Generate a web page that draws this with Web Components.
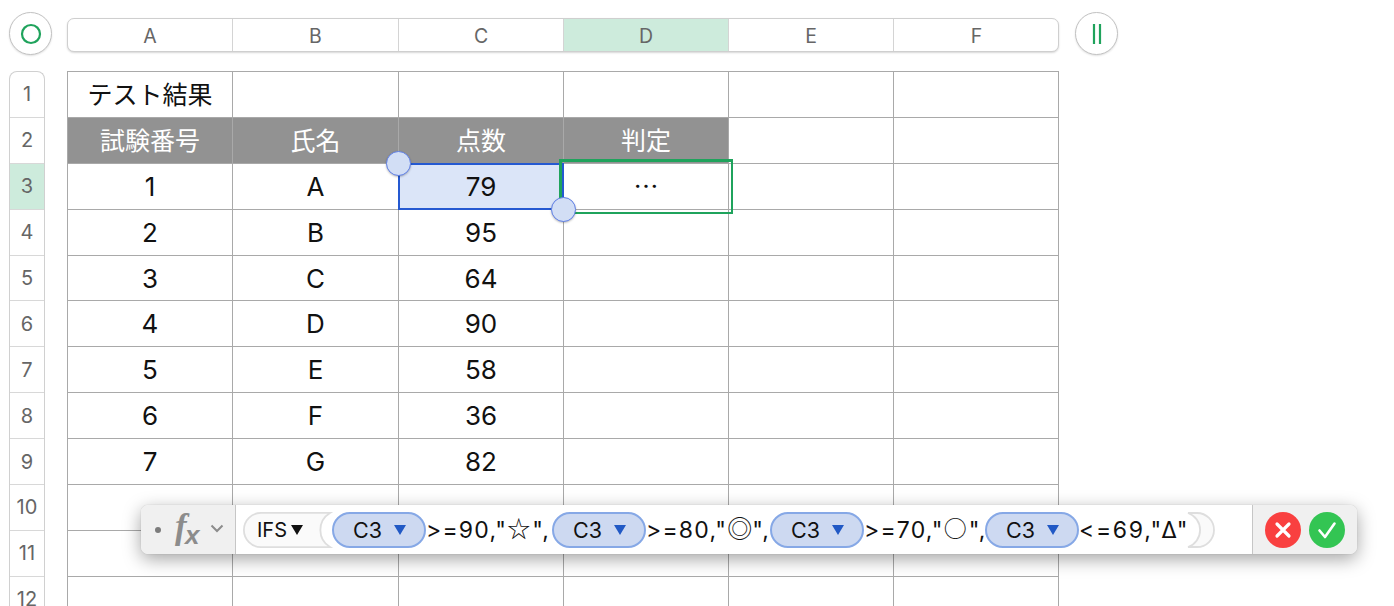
<!DOCTYPE html>
<html lang="ja"><head><meta charset="utf-8"><style>
html,body{margin:0;padding:0;background:#fff;overflow:hidden}
body{width:1394px;height:606px;font-family:Inter,"Noto Sans CJK JP",sans-serif}
</style></head><body>
<x-app></x-app>
<script>
const COLS=[165,166,165,165,165,165];
const def=(n,html,init)=>customElements.define(n,class extends HTMLElement{
  constructor(){super();this.attachShadow({mode:'open'}).innerHTML=html;}
  connectedCallback(){init&&init(this,this.shadowRoot);}
});
def('x-round-button',`<style>:host{display:flex;align-items:center;justify-content:center;width:43px;height:43px;box-sizing:border-box;border:1.5px solid #c2c2c2;border-radius:50%;background:#fff;box-shadow:0 1px 2px rgba(0,0,0,.12);flex:none}</style><slot></slot>`);
def('x-col-header',`<style>
:host{display:block;flex:none;margin:6px 16px 0 15px;box-sizing:border-box;height:34px;width:992px;border:1px solid #cfcfcf;border-radius:7px;box-shadow:0 1px 2px rgba(0,0,0,.16);overflow:hidden;background:#fff}
#g{display:flex;height:100%}
span{display:flex;align-items:center;justify-content:center;box-sizing:border-box;border-right:1px solid #d4d4d4;font:19.5px Inter,sans-serif;color:#666;height:100%;flex:none;padding-top:1px}
span:last-child{border-right:0}
.on{background:#cdebdc}
</style><div id="g"></div>`,(e,s)=>{s.getElementById('g').innerHTML=COLS.map((w,i)=>`<span style="width:${w}px" class="${i==3?'on':''}">${'ABCDEF'[i]}</span>`).join('')});
def('x-row-header',`<style>
:host{display:block;flex:none;width:36px;box-sizing:border-box;border:1px solid #d0d0d0;border-bottom:0;border-radius:8px 8px 0 0;overflow:hidden;background:#fff;height:560px;margin-right:22px}
span{display:flex;align-items:center;justify-content:center;box-sizing:border-box;height:45.9px;border-bottom:1px solid #d8d8d8;font:20px Inter,sans-serif;color:#666}
.on{background:#cdebdc}
</style><div id="g"></div>`,(e,s)=>{let h='';for(let i=1;i<=12;i++)h+=`<span class="${i==3?'on':''}">${i}</span>`;s.getElementById('g').innerHTML=h});
def('x-cell',`<style>
:host{display:flex;align-items:center;justify-content:center;box-sizing:border-box;height:100%;border-right:1px solid #a9a9a9;border-bottom:1px solid #a9a9a9;font:26px Inter,"Noto Sans CJK JP",sans-serif;color:#111;background:#fff}
:host([head]){background:#929292;color:#fff}
:host([jp]){font-family:"Noto Sans CJK JP",sans-serif;font-size:25px;padding-bottom:3px}
</style><slot></slot>`);
const DATA=[['テスト結果','','','','',''],['試験番号','氏名','点数','判定','',''],['1','A','79','…','',''],['2','B','95','','',''],['3','C','64','','',''],['4','D','90','','',''],['5','E','58','','',''],['6','F','36','','',''],['7','G','82','','','']];
def('x-sheet',`<style>
:host{display:block;position:relative;flex:none;width:992px;box-sizing:border-box;border-top:1px solid #a9a9a9;border-left:1px solid #a9a9a9;height:540px;}
#g{display:grid;grid-template-columns:${COLS.map(c=>c+'px').join(' ')};grid-auto-rows:45.9px}
.sel{position:absolute;left:330px;top:91px;width:166px;height:47px;box-sizing:border-box;border:2px solid #2559d1;background:#dbe5f8;display:flex;align-items:center;justify-content:center;font:26px Inter,sans-serif;color:#111}
.frame{position:absolute;left:491px;top:87px;width:174px;height:55px;box-sizing:border-box;border:3px solid #1fa35c;border-right-width:2.5px;border-bottom-width:2.5px}
.sel2{position:absolute;left:494px;top:91px;width:2px;height:47px;background:#2559d1}
.h{position:absolute;width:25px;height:25px;box-sizing:border-box;border-radius:50%;background:#d2def5;border:1.5px solid #5f7fe6;box-shadow:0 1px 2px rgba(0,0,0,.25)}
</style><div id="g"></div><div class="sel">79</div><div class="frame"></div><div class="sel2"></div><div class="h" style="left:318px;top:79px"></div><div class="h" style="left:483px;top:125px"></div>`,(e,s)=>{
  let h='';
  for(let r=0;r<12;r++)for(let c=0;c<6;c++){
    const t=(DATA[r]||[])[c]||'';
    const jp=r<2||t==='…';
    h+=`<x-cell ${r==1&&c<4?'head':''} ${jp?'jp':''}>${t}</x-cell>`;
  }
  s.getElementById('g').innerHTML=h;
});
def('x-c3',`<style>
:host{display:flex;align-items:center;flex:none;width:94px;height:36px;box-sizing:border-box;border:2px solid #86a8e6;border-radius:18px;background:#cdd9f1;font:21.5px Inter,sans-serif;color:#111;position:relative;padding-left:19px}
svg{margin-left:12px;margin-top:0}
</style>C3<svg width="12" height="10" viewBox="0 0 12 10"><path d="M0 0H12L6 10Z" fill="#2159c5"/></svg>`);
def('x-ifs',`<style>
:host{display:block;flex:none;width:89px;height:36px;position:relative;font:20px Inter,sans-serif;color:#111}
svg{position:absolute;left:0;top:0}
div{position:absolute;left:14px;top:0;height:36px;display:flex;align-items:center}
i{display:block;margin-left:4px;width:0;height:0;border-left:6.5px solid transparent;border-right:6.5px solid transparent;border-top:10px solid #111;margin-top:0}
</style><svg width="92" height="36" viewBox="0 0 92 36"><path d="M18 .9H87A20 20 0 0 0 87 35.1H18A17 17 0 0 1 18 .9Z" fill="#fafafa" stroke="#dedede" stroke-width="1.8"/></svg><div>IFS<i></i></div>`);
def('x-crescent',`<style>:host{display:block;flex:none;width:30px;height:36px}</style><svg width="30" height="36" viewBox="0 0 30 36"><path d="M1 1H10A17 17 0 0 1 10 35H1A18 18 0 0 0 1 1Z" fill="#fafafa" stroke="#dedede" stroke-width="1.8"/></svg>`);
def('x-run',`<style>
:host{display:flex;align-items:center;flex:none;height:36px;box-sizing:border-box;white-space:nowrap;font:23px Inter,"Noto Sans CJK JP",sans-serif;letter-spacing:1.2px;color:#111}
</style><slot></slot>`);
def('x-sym',`<style>
:host{display:inline-block;font:23px/1 "Noto Sans CJK JP",sans-serif;letter-spacing:0;margin:0 2px 4px 0}
</style><slot></slot>`);
def('x-formula-bar',`<style>
:host{display:flex;position:absolute;left:141px;top:505px;width:1216px;height:49px;box-sizing:border-box;border-radius:7px;background:#fff;box-shadow:0 5px 18px rgba(0,0,0,.36),0 0 1px rgba(0,0,0,.3);z-index:5}
.l{display:flex;align-items:center;width:95px;flex:none;box-sizing:border-box;background:#f0f0f0;border-right:1px solid #c6c6c6;border-radius:7px 0 0 7px;padding-left:14px;color:#8c8c8c}
.dot{width:6px;height:6px;border-radius:50%;background:#7c7c7c;margin-top:1px}
.fx{font:italic bold 35px "Liberation Serif",serif;margin-left:14px;margin-top:-6px;line-height:1;position:relative;width:36px;height:36px;flex:none;display:block}
.fx b{position:absolute;left:0;top:0;}
.fx sub{position:absolute;left:10px;top:11px;font:italic bold 26px "Liberation Sans",sans-serif;vertical-align:baseline}
.chev{margin-left:-1px;margin-top:-2px}
.m{flex:1;display:flex;align-items:center;padding-left:7px;background:#fff;min-width:0}
.r{display:flex;align-items:center;gap:8px;width:105px;flex:none;box-sizing:border-box;background:#f0f0f0;border-left:1px solid #c6c6c6;border-radius:0 7px 7px 0;padding-left:12px}
</style>
<div class="l"><span class="dot"></span><span class="fx"><b>f</b><sub>x</sub></span><svg class="chev" width="14" height="9" viewBox="0 0 14 9"><path d="M1.5 1.5L7 7L12.5 1.5" fill="none" stroke="#8c8c8c" stroke-width="2"/></svg></div>
<div class="m"><x-ifs></x-ifs><x-c3></x-c3><x-run style="width:126px">&gt;=90,"<x-sym>☆</x-sym>",</x-run><x-c3></x-c3><x-run style="width:124px">&gt;=80,"<x-sym style="font-size:25px;margin-right:0">◎</x-sym>",</x-run><x-c3></x-c3><x-run style="width:121px">&gt;=70,"<x-sym>○</x-sym>",</x-run><x-c3></x-c3><x-run style="width:108px;letter-spacing:1.7px">&lt;=69,"∆"</x-run><x-crescent></x-crescent></div>
<div class="r"><svg width="36" height="36" viewBox="0 0 36 36"><circle cx="18" cy="18" r="18" fill="#f94040"/><path d="M12 12L24 24M24 12L12 24" stroke="#fff" stroke-width="3.2" stroke-linecap="round"/></svg><svg width="36" height="36" viewBox="0 0 36 36"><circle cx="18" cy="18" r="18" fill="#33c553"/><path d="M10.5 18.5L16 25L25.5 11.5" fill="none" stroke="#fff" stroke-width="2.6" stroke-linecap="round" stroke-linejoin="round"/></svg></div>`);
def('x-app',`<style>
:host{display:block;position:relative;width:1394px;height:606px;overflow:hidden;background:#fff}
.top{display:flex;padding:12px 0 0 9px;height:71px;box-sizing:border-box}
.body{display:flex;padding-left:9px}
</style>
<div class="top"><x-round-button><svg width="22" height="22" viewBox="0 0 22 22"><circle cx="11" cy="11" r="9" fill="none" stroke="#1fa35c" stroke-width="2.2"/></svg></x-round-button><x-col-header></x-col-header><x-round-button><svg width="10" height="22" viewBox="0 0 10 22"><path d="M2 1V21M8 1V21" stroke="#1fa35c" stroke-width="2.2"/></svg></x-round-button></div>
<div class="body"><x-row-header></x-row-header><x-sheet></x-sheet></div>
<x-formula-bar></x-formula-bar>`);
</script></body></html>
